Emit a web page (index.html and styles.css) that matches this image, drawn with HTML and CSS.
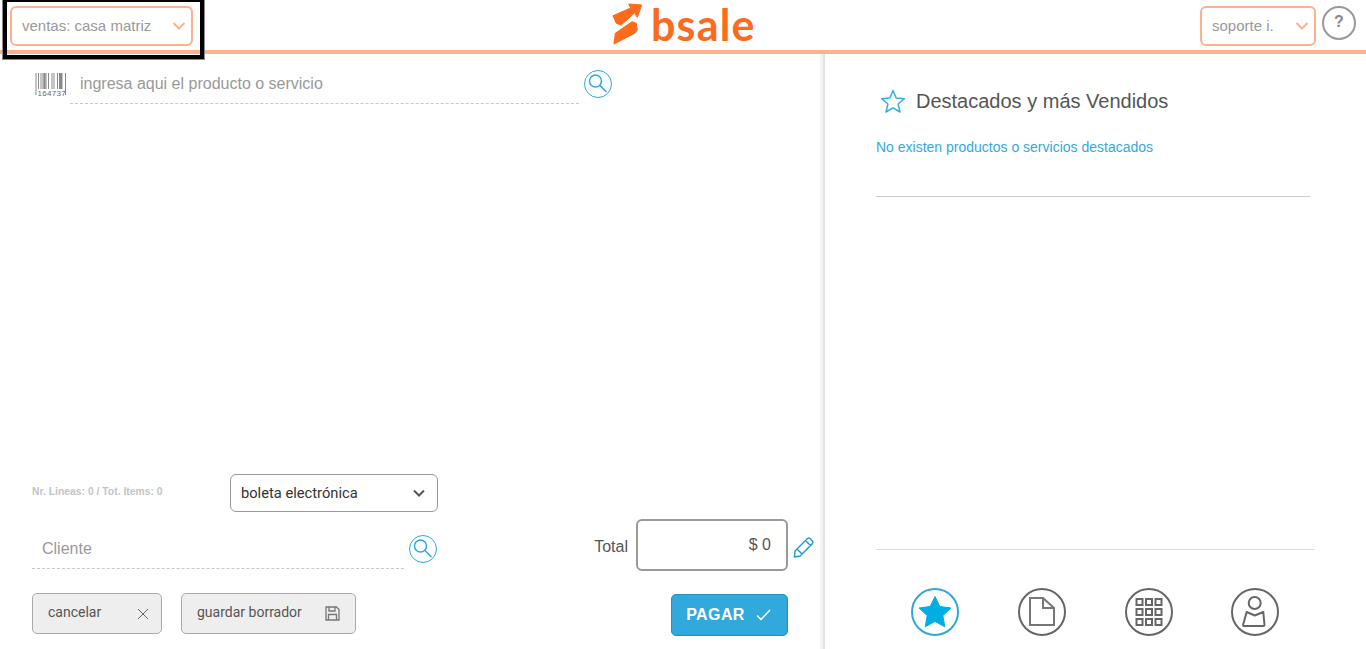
FILE: index.html
```html
<!DOCTYPE html>
<html lang="es">
<head>
<meta charset="utf-8">
<title>bsale</title>
<link rel="stylesheet" href="styles.css">
</head>
<body>
<div class="highlight"></div>
<header class="topbar">
  <div class="topbar-left">
    <div class="top-select top-select-wide"><span>ventas: casa matriz</span>
      <svg class="chev" width="14" height="8" viewBox="0 0 14 8"><path d="M1.500 1 7 6.500 12.500 1" fill="none" stroke="#ffb08d" stroke-width="2"/></svg>
    </div>
  </div>
  <div class="logo">
    <svg width="30" height="44" viewBox="0 0 30 44"><path fill="#fb6a1d" stroke="#fb6a1d" stroke-linejoin="round" d="M1 12.700 18.700 5 16.700 1 29.700 2 25.300 14.300 22.700 9.700 9.300 22 4.300 20.300Z"/><path fill="#fb6a1d" stroke="#fb6a1d" stroke-linejoin="round" d="M3.300 30.300 20 18.700 24.300 20.300 25.300 27 22.700 30.300 2 41Z"/></svg>
    <span class="logo-text">bsale</span>
  </div>
  <div class="topbar-right">
    <div class="top-select top-select-narrow"><span>soporte i.</span>
      <svg class="chev" width="14" height="8" viewBox="0 0 14 8"><path d="M1.500 1 7 6.500 12.500 1" fill="none" stroke="#ffb08d" stroke-width="2"/></svg>
    </div>
    <div class="help">?</div>
  </div>
</header>
<main class="layout">
  <section class="left">
    <div class="search-row">
      <svg class="barcode" width="32" height="24" viewBox="0 0 32 24">
        <path stroke="#8a8a8a" fill="none" d="M1 0v22M3.500 0v16M6 0v16M8 0v16M11 0v16M13.500 0v16M17 0v16M19 0v16M22.500 0v16M24.500 0v16M27 0v16M30.500 0v22"/>
        <path stroke="#8a8a8a" fill="none" stroke-width="2" d="M9.500 0v16M26 0v16"/>
        <text x="2.500" y="23" class="barcode-text">164737</text>
      </svg>
      <div class="field field-product">ingresa aqui el producto o servicio</div>
      <svg class="round-search" width="30" height="30" viewBox="0 0 30 30"><circle cx="15" cy="15" r="13.500" fill="none" stroke="#2ea8dc"/><circle cx="12.500" cy="12" r="6" fill="none" stroke="#2ea8dc" stroke-width="1.500"/><path d="m17 16.500 6.500 6.500" stroke="#2ea8dc" stroke-width="1.500"/></svg>
    </div>
    <div class="bottom">
      <div class="bottom-main">
        <div class="doc-row">
          <div class="counts">Nr. Lineas: <b>0</b> / Tot. Items: <b>0</b></div>
          <div class="doc-select"><span>boleta electrónica</span>
            <svg width="12" height="8" viewBox="0 0 12 8"><path d="M1 1.500 6 6.500 11 1.500" fill="none" stroke="#555" stroke-width="2"/></svg>
          </div>
        </div>
        <div class="client-row">
          <div class="field field-client">Cliente</div>
          <svg class="round-search" width="30" height="30" viewBox="0 0 30 30"><circle cx="15" cy="15" r="13.500" fill="none" stroke="#2ea8dc"/><circle cx="12.500" cy="12" r="6" fill="none" stroke="#2ea8dc" stroke-width="1.500"/><path d="m17 16.500 6.500 6.500" stroke="#2ea8dc" stroke-width="1.500"/></svg>
        </div>
        <div class="actions">
          <button class="btn btn-cancel"><span>cancelar</span>
            <svg width="12" height="12" viewBox="0 0 12 12"><path d="M1 1 11 11M11 1 1 11" stroke="#666" fill="none"/></svg>
          </button>
          <button class="btn btn-draft"><span>guardar borrador</span>
            <svg width="15" height="15" viewBox="0 0 15 15"><path d="M1 1H11.500L14 3.500V14H1Z" fill="none" stroke="#777" stroke-width="1.300"/><path d="M4 1V5H10V1M3.500 14V8.500H11.500V14" fill="none" stroke="#777" stroke-width="1.300"/></svg>
          </button>
        </div>
      </div>
      <div class="totals">
        <div class="total-row">
          <span class="total-label">Total</span>
          <div class="total-box">$ 0</div>
          <svg class="pencil" width="22" height="22" viewBox="0 0 22 22"><path d="M2 15 14.500 2.500a2 2 0 0 1 2.500 0l2.500 2.500a2 2 0 0 1 0 2.500L7 20 1.500 21Z M12.500 4.500 17.500 9.500 M4 13 9 18" fill="none" stroke="#1b9ad6" stroke-width="1.400"/></svg>
        </div>
        <button class="pay">PAGAR
          <svg width="15" height="12" viewBox="0 0 15 12"><path d="M1 6.500 5 10.500 14 1" fill="none" stroke="#fff" stroke-width="1.500"/></svg>
        </button>
      </div>
    </div>
  </section>
  <aside class="right">
    <div class="featured-head">
      <svg width="26" height="24" viewBox="0 0 26 24"><path d="M13 1.500 16.200 9 24.300 9.700 18.100 15 20 23 13 18.800 6 23 7.900 15 1.700 9.700 9.800 9Z" fill="none" stroke="#35acdf" stroke-width="1.500" stroke-linejoin="round"/></svg>
      <h2>Destacados y más Vendidos</h2>
    </div>
    <p class="empty">No existen productos o servicios destacados</p>
    <div class="spacer"></div>
    <nav class="tabs">
      <div class="tab tab-active"><svg width="48" height="48" viewBox="0 0 48 48"><circle cx="24" cy="24" r="23" fill="none" stroke="#2ea8dc" stroke-width="2"/><path d="M24 8.500 28.800 18.500 40 20 31.800 27.600 33.800 38.800 24 33.400 14.200 38.800 16.200 27.600 8 20 19.200 18.500Z" fill="#00aee3" stroke="#00aee3" stroke-linejoin="round"/></svg></div>
      <div class="tab"><svg width="48" height="48" viewBox="0 0 48 48"><circle cx="24" cy="24" r="23" fill="none" stroke="#666" stroke-width="2"/><path d="M12 10H25L36 20V37H12Z M25 10V20H36" fill="none" stroke="#777" stroke-width="2"/></svg></div>
      <div class="tab tab-grid"><svg width="48" height="48" viewBox="0 0 48 48"><circle cx="24" cy="24" r="23" fill="none" stroke="#666" stroke-width="2"/><g fill="none" stroke="#666" stroke-width="2"><rect x="11.500" y="11" width="6" height="6"/><rect x="21" y="11" width="6" height="6"/><rect x="30.500" y="11" width="6" height="6"/><rect x="11.500" y="21" width="6" height="6"/><rect x="21" y="21" width="6" height="6"/><rect x="30.500" y="21" width="6" height="6"/><rect x="11.500" y="31" width="6" height="6"/><rect x="21" y="31" width="6" height="6"/><rect x="30.500" y="31" width="6" height="6"/></g></svg></div>
      <div class="tab"><svg width="48" height="48" viewBox="0 0 48 48"><circle cx="24" cy="24" r="23" fill="none" stroke="#666" stroke-width="2"/><circle cx="23.700" cy="15" r="6" fill="none" stroke="#666" stroke-width="2"/><path d="M15.700 24 23.700 27.500 32.300 24 33.500 37a1 1 0 0 1-1 1H13a1 1 0 0 1-1-1Z" fill="none" stroke="#666" stroke-width="2" stroke-linejoin="round"/></svg></div>
    </nav>
  </aside>
</main>
</body>
</html>
```
FILE: styles.css
```css
* { box-sizing: border-box; }
html, body { margin: 0; height: 649px; overflow: hidden; }
body { font-family: "Liberation Sans", Arial, sans-serif; background: #fff; color: #555; position: relative; }

.highlight { position: absolute; left: 3px; top: -2px; width: 201px; height: 61px; border: 4px solid #000; outline: 1px solid #888; z-index: 5; pointer-events: none; }

.topbar { height: 54px; border-bottom: 4px solid #ffb08d; display: flex; align-items: flex-start; justify-content: space-between; position: relative; }
.topbar-left { padding: 6px 0 0 10px; }
.topbar-right { padding: 6px 10px 0 0; display: flex; gap: 6px; }
.top-select { height: 40px; border: 2px solid #ffb08d; border-radius: 6px; display: flex; align-items: center; justify-content: space-between; padding: 0 5px 0 10px; font-size: 15px; color: #999; background: #fff; }
.top-select span { padding-bottom: 2px; }
.top-select-wide { width: 183px; }
.top-select-narrow { width: 116px; }
.chev { flex: none; }
.help { width: 34px; height: 34px; border: 2px solid #999; border-radius: 50%; color: #888; font-weight: 700; font-size: 16px; display: flex; align-items: center; justify-content: center; padding-bottom: 2px; }

.logo { position: absolute; left: 612px; top: 3px; display: flex; align-items: flex-start; gap: 9px; }
.logo-text { font-family: "Lato", sans-serif; font-weight: 700; font-size: 43px; line-height: 44px; color: #fb6a1d; letter-spacing: 1.2px; }

.layout { display: flex; height: 595px; }
.left { width: 825px; flex: none; border-right: 2px solid #e2e2e2; box-shadow: inset -3px 0 0 #f3f3f3; display: flex; flex-direction: column; justify-content: space-between; padding: 14px 5px 15px 32px; }
.right { flex: 1; display: flex; flex-direction: column; padding: 32px 51px 13px 51px; }

.search-row { display: flex; align-items: flex-start; margin-left: -1px; }
.barcode { margin: 5px 3px 0 4px; flex: none; }
.barcode-text { font-size: 8px; fill: #666; font-family: "Liberation Sans", Arial, sans-serif; letter-spacing: 0.3px; }
.field { border-bottom: 1px dashed #c8c8c8; color: #999; font-size: 16px; }
.field-product { width: 509px; height: 36px; padding: 7px 0 0 10px; }
.round-search { flex: none; }
.search-row .round-search { margin: 1px 0 0 4px; }

.bottom { display: flex; justify-content: space-between; align-items: flex-end; }
.bottom-main { width: 406px; display: flex; flex-direction: column; }
.doc-row { display: flex; justify-content: space-between; align-items: flex-start; }
.counts { font-size: 10.3px; color: #c4c4c4; padding-top: 12px; font-weight: 700; letter-spacing: 0.03px; }
.doc-select { width: 208px; height: 38px; border: 1px solid #999; border-radius: 6px; font-family: "Roboto", sans-serif; font-size: 14.7px; color: #333; display: flex; align-items: center; justify-content: space-between; padding: 0 12px 0 10px; }
.client-row { display: flex; align-items: flex-start; margin-top: 20px; gap: 4px; width: 406px; }
.field-client { width: 372px; height: 37px; padding: 8px 0 0 10px; flex: none; }
.client-row .round-search { margin-top: 2px; }
.actions { display: flex; gap: 19px; margin-top: 24px; }
.btn { height: 41px; border: 1px solid #aaa; border-radius: 5px; background: #eee; font-family: "Roboto", sans-serif; font-size: 14px; color: #555; display: flex; align-items: center; justify-content: space-between; margin: 0; }
.btn span { padding-bottom: 4px; }
.btn-cancel { width: 130px; padding: 0 12px 0 15px; }
.btn-draft { width: 175px; padding: 0 15px 0 15px; }

.totals { display: flex; flex-direction: column; align-items: flex-end; margin: 0 3px -2px 0; }
.total-row { display: flex; align-items: center; }
.total-label { font-size: 16px; color: #555; margin-right: 8px; padding-top: 4px; }
.total-box { width: 152px; height: 52px; border: 2px solid #999; border-radius: 6px; font-size: 16px; color: #555; text-align: right; padding: 15px 15px 0 0; }
.pencil { margin: 4px 0 0 5px; }
.pay { width: 117px; height: 42px; margin: 23px 27px 0 0; background: #32a9dd; border: 1px solid #2590c0; border-radius: 5px; color: #fff; font-family: "Liberation Sans", Arial, sans-serif; font-weight: 700; font-size: 16px; letter-spacing: 0.4px; display: flex; align-items: center; justify-content: center; gap: 11px; padding: 0 2px 0 0; }

.featured-head { display: flex; align-items: center; gap: 10px; padding-left: 4px; height: 30px; }
.featured-head h2 { margin: 0; font-size: 20px; font-weight: 400; color: #555; }
.empty { margin: 23px 0 0; padding-bottom: 40px; border-bottom: 1px solid #ccc; width: 434px; font-size: 14px; color: #35a8dc; line-height: 17px; }
.spacer { flex: 1; }
.tabs { border-top: 1px solid #ddd; width: 439px; display: flex; justify-content: space-between; padding: 38px 36px 0 35px; }
.tab { width: 48px; height: 48px; }
.tab-grid { margin: 0 -1px 0 1px; }
.tab svg { display: block; }
```
